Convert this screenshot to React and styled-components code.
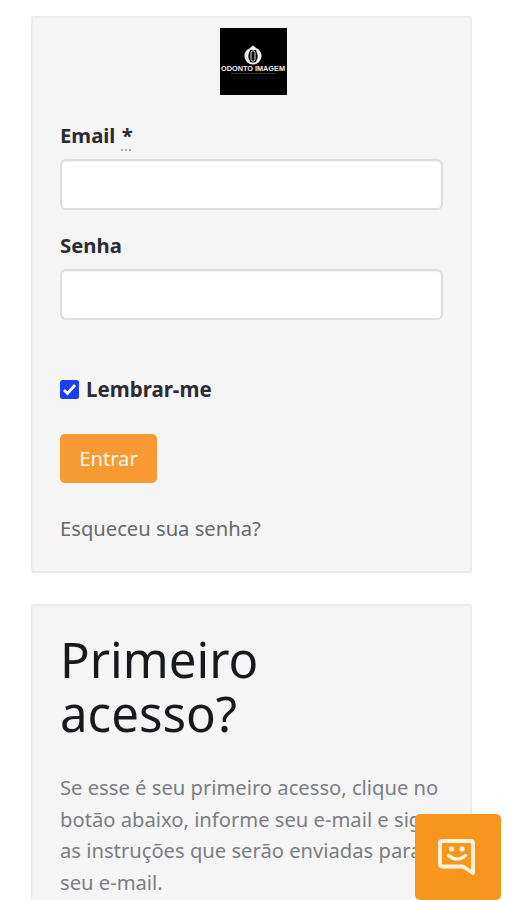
import React, { useState } from "react"
import styled, { createGlobalStyle } from "styled-components"

const GlobalStyle = createGlobalStyle`
  * {
    box-sizing: border-box;
  }
  html,
  body {
    height: 100%;
    margin: 0;
    overflow: hidden;
  }
  body {
    background: #fff;
    color: #2b2c31;
    font-family: "Noto Sans", "Open Sans", sans-serif;
    font-size: 20.2px;
  }
`

const Page = styled.main`
  display: flex;
  flex-direction: column;
  gap: 31px;
  width: 441px;
  margin-left: 31px;
  padding-top: 16px;
`

const Card = styled.section`
  padding: ${(props) => props.$padding};
  background: #f5f5f5;
  border: 2px solid #ececec;
  border-radius: 2px;
`

const Logo = styled.svg`
  display: block;
  width: 67px;
  height: 67px;
  margin: 0 auto 27px 187px;
`

const Field = styled.div`
  display: flex;
  flex-direction: column;
  margin: 0 0 ${(props) => props.$gap}px 27px;
  width: 383px;
`

const Label = styled.label`
  height: 37px;
  line-height: 26px;
  font-weight: 700;
  font-size: 20.3px;

  abbr {
    margin-left: 1px;
    text-decoration: underline dotted #aaa 2px;
    text-underline-offset: 6px;
  }
`

const Input = styled.input`
  height: 51px;
  padding: 0 16px;
  font: inherit;
  background: #fff;
  border: 2px solid #dedede;
  border-radius: 6px;
  box-shadow: inset 0 1px 2px rgba(0, 0, 0, 0.06);
`

const Remember = styled.label`
  display: flex;
  align-items: center;
  gap: 7px;
  height: 26px;
  margin: 0 0 32px 27px;
  font-size: 20.5px;
  font-weight: 700;
  line-height: 26px;

  input {
    position: absolute;
    opacity: 0;
  }
`

const Check = styled.svg`
  width: 19px;
  height: 19px;
`

const Button = styled.button`
  display: block;
  width: 97px;
  height: 49px;
  margin: 0 0 32px 27px;
  padding: 0 0 1px;
  color: #fff6e8;
  font: inherit;
  background: #f79a32;
  border: 0;
  border-radius: 5px;
`

const Forgot = styled.a`
  display: block;
  margin-left: 27px;
  color: #66686e;
  line-height: 26px;
  text-decoration: none;
`

const Title = styled.h1`
  margin: 0 0 32px 27px;
  color: #17191d;
  font-size: 49.2px;
  font-weight: 400;
  line-height: 54px;
`

const Text = styled.p`
  margin: 0 0 0 27px;
  color: #7b7d84;
  line-height: 31.7px;
  white-space: nowrap;
`

const Chat = styled.button`
  position: fixed;
  top: 814px;
  left: 415px;
  display: flex;
  width: 86px;
  height: 86px;
  padding: 23px 0 0 22px;
  background: #f6961e;
  border: 0;
  border-radius: 5px;
`

function BrandLogo() {
  return (
    <Logo viewBox="0 0 67 67" role="img">
      <rect width="67" height="67" fill="#000" />
      <circle cx="33" cy="28" r="7.6" stroke="#eee" strokeWidth="2" />
      <path d="M30 20l3-2.5 3 2.5v2h-6z" fill="#eee" />
      <path
        d="M29 22q-4 6 0 12M37 22q4 6 0 12"
        stroke="#eee"
        strokeWidth="2.5"
        fill="none"
      />
      <rect
        x="31"
        y="23"
        width="4"
        height="10"
        rx="1.5"
        fill="none"
        stroke="#eee"
      />
      <text
        x="1"
        y="43"
        fill="#eee"
        fontFamily="Liberation Sans, sans-serif"
        fontSize="6.5"
        fontWeight="700"
        textLength="64"
        lengthAdjust="spacingAndGlyphs"
      >
        ODONTO IMAGEM
      </text>
      <path d="M11 45.5h45" stroke="#444" strokeWidth="1" strokeDasharray="3 1" />
    </Logo>
  )
}

function ChatIcon() {
  return (
    <svg width="40" height="40" viewBox="0 0 40 40" fill="none">
      <path
        d="M5 4h29a2 2 0 0 1 2 2v30l-10-6.5H5a2 2 0 0 1-2-2V6a2 2 0 0 1 2-2z"
        stroke="#fff5df"
        strokeWidth="3.8"
        strokeLinejoin="round"
      />
      <rect x="12" y="9.5" width="5" height="5" rx="1.8" fill="#fff5df" />
      <rect x="22.5" y="9.5" width="5" height="5" rx="1.8" fill="#fff5df" />
      <path
        d="M11.5 18.5q8.5 7 17 0"
        stroke="#fff5df"
        strokeWidth="3.5"
        strokeLinecap="round"
      />
    </svg>
  )
}

export default function App() {
  const [remember, setRemember] = useState(true)

  return (
    <>
      <GlobalStyle />
      <Page>
        <Card $padding="10px 0 30px">
          <BrandLogo />
          <Field $gap={22}>
            <Label htmlFor="email">
              Email <abbr>*</abbr>
            </Label>
            <Input id="email" type="email" />
          </Field>
          <Field $gap={56}>
            <Label htmlFor="password">Senha</Label>
            <Input id="password" type="password" />
          </Field>
          <Remember>
            <input
              type="checkbox"
              checked={remember}
              onChange={(e) => setRemember(e.target.checked)}
            />
            <Check viewBox="0 0 19 19">
              <rect width="19" height="19" rx="2.5" fill="#1740f5" />
              {remember && (
                <path
                  d="M4 10l3.5 3.5L15 5"
                  fill="none"
                  stroke="#fff"
                  strokeWidth="2.8"
                />
              )}
            </Check>
            <span>Lembrar-me</span>
          </Remember>
          <Button type="button">Entrar</Button>
          <Forgot href="#">Esqueceu sua senha?</Forgot>
        </Card>

        <Card $padding="26px 0 40px">
          <Title>
            Primeiro
            <br />
            acesso?
          </Title>
          <Text>
            Se esse é seu primeiro acesso, clique no
            <br />
            botão abaixo, informe seu e-mail e siga
            <br />
            as instruções que serão enviadas para
            <br />
            seu e-mail.
          </Text>
        </Card>
      </Page>
      <Chat type="button">
        <ChatIcon />
      </Chat>
    </>
  )
}
